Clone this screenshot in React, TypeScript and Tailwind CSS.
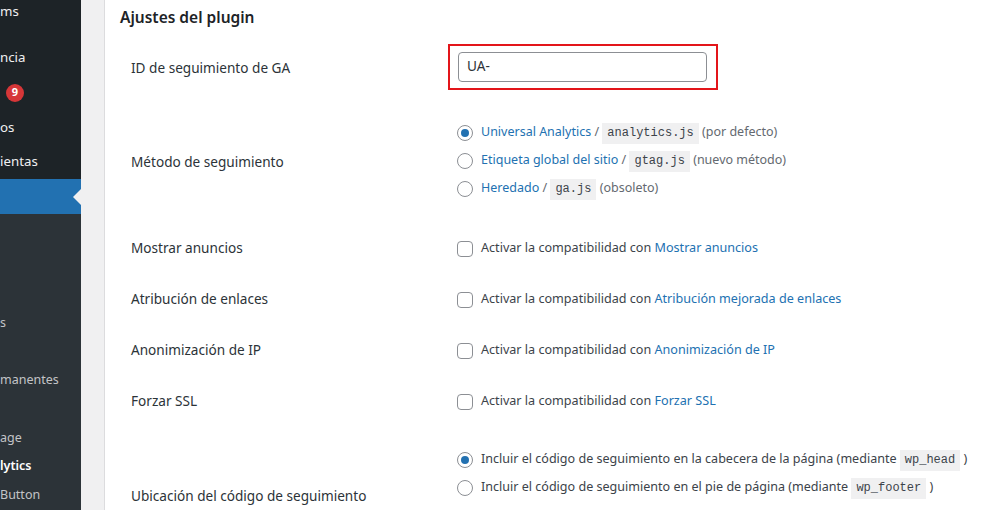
import React from "react";

function Code({ children }: { children: React.ReactNode }) {
  return (
    <span className="inline-block h-[21px] px-[5px] bg-[#f0f0f1] font-['Liberation_Mono',monospace] text-[12px] leading-[21px] text-[#3c434a]">
      {children}
    </span>
  );
}

function Radio({ checked }: { checked?: boolean }) {
  return (
    <span className="flex h-[16px] w-[16px] shrink-0 items-center justify-center rounded-full border border-[#8c8f94] bg-white">
      {checked && <span className="h-[8px] w-[8px] rounded-full bg-[#2271b1]" />}
    </span>
  );
}

function Checkbox() {
  return <span className="h-[16px] w-[16px] shrink-0 rounded-[4px] border border-[#8c8f94] bg-white" />;
}

function Label({ children }: { children: React.ReactNode }) {
  return <div className="w-[337px] shrink-0 self-center pl-[11px] text-[13.6px] text-[#2c3338]">{children}</div>;
}

function CheckRow({ label, link }: { label: string; link: string }) {
  return (
    <div className="flex h-[51px]">
      <Label>{label}</Label>
      <div className="flex items-center gap-[8px] text-[12.6px] text-[#3c434a]">
        <Checkbox />
        <span>
          Activar la compatibilidad con <span className="text-[#2271b1]">{link}</span>
        </span>
      </div>
    </div>
  );
}

export default function App() {
  return (
    <div className="flex h-[510px] w-[1001px] overflow-hidden bg-white font-['Noto_Sans',sans-serif]">
      <aside className="flex w-[81px] shrink-0 flex-col bg-[#1d2327] text-[13.3px] text-[#f0f0f1]">
        <div className="flex h-[24px] items-center">ms</div>
        <div className="h-[17px]" />
        <div className="flex h-[34px] items-center">ncia</div>
        <div className="flex h-[35px] items-center pl-[6px]">
          <span className="flex h-[18px] w-[18px] items-center justify-center rounded-full bg-[#d63638] text-[11px] font-bold text-white">
            9
          </span>
        </div>
        <div className="flex h-[35px] items-center">os</div>
        <div className="flex h-[34px] items-center">ientas</div>
        <div className="relative h-[35px] bg-[#2271b1]">
          <span className="absolute right-0 top-[10px] h-0 w-0 border-y-[8px] border-r-[8px] border-y-transparent border-r-[#f0f0f1]" />
        </div>
        <div className="flex flex-1 flex-col bg-[#2c3338] text-[12.5px] text-[#c3c4c7]">
          <div className="h-[95px]" />
          <div className="flex h-[28px] items-center">s</div>
          <div className="h-[29px]" />
          <div className="flex h-[28px] items-center">manentes</div>
          <div className="h-[30px]" />
          <div className="flex h-[28px] items-center">age</div>
          <div className="flex h-[28px] items-center font-semibold text-white">lytics</div>
          <div className="flex h-[30px] items-center">Button</div>
        </div>
      </aside>
      <div className="w-[23px] shrink-0 bg-[#f0f0f1]" />
      <main className="flex-1 border-l border-[#dcdcde] bg-white pl-[15px]">
        <h2 className="flex h-[35px] items-center text-[15.5px] font-semibold text-[#1d2327]">Ajustes del plugin</h2>

        <div className="flex h-[66px]">
          <Label>ID de seguimiento de GA</Label>
          <div className="mb-[3px] ml-[-9px] self-center border-2 border-[#e3151a] py-[6px] pl-[8px] pr-[9px]">
            <div className="flex h-[30px] w-[249px] items-center rounded-[4px] border border-[#8c8f94] pl-[8px] text-[13.6px] text-[#2c3338]">
              UA-
            </div>
          </div>
        </div>

        <div className="flex h-[122px]">
          <Label>Método de seguimiento</Label>
          <div className="mb-[2px] flex flex-col self-center text-[12.5px] text-[#646970]">
            <div className="flex h-[28px] items-center gap-[8px]">
              <Radio checked />
              <span>
                <span className="text-[#2271b1]">Universal Analytics</span> / <Code>analytics.js</Code> (por defecto)
              </span>
            </div>
            <div className="flex h-[28px] items-center gap-[8px]">
              <Radio />
              <span>
                <span className="text-[#2271b1]">Etiqueta global del sitio</span> / <Code>gtag.js</Code> (nuevo método)
              </span>
            </div>
            <div className="flex h-[28px] items-center gap-[8px]">
              <Radio />
              <span>
                <span className="text-[#2271b1]">Heredado</span> / <Code>ga.js</Code> (obsoleto)
              </span>
            </div>
          </div>
        </div>

        <CheckRow label="Mostrar anuncios" link="Mostrar anuncios" />
        <CheckRow label="Atribución de enlaces" link="Atribución mejorada de enlaces" />
        <CheckRow label="Anonimización de IP" link="Anonimización de IP" />
        <CheckRow label="Forzar SSL" link="Forzar SSL" />

        <div className="flex h-[138px]">
          <Label>Ubicación del código de seguimiento</Label>
          <div className="flex flex-col self-start pt-[19px] text-[12.55px] text-[#3c434a]">
            <div className="flex h-[28px] items-center gap-[8px]">
              <Radio checked />
              <span>
                Incluir el código de seguimiento en la cabecera de la página (mediante <Code>wp_head</Code> )
              </span>
            </div>
            <div className="flex h-[28px] items-center gap-[8px]">
              <Radio />
              <span>
                Incluir el código de seguimiento en el pie de página (mediante <Code>wp_footer</Code> )
              </span>
            </div>
          </div>
        </div>
      </main>
    </div>
  );
}
